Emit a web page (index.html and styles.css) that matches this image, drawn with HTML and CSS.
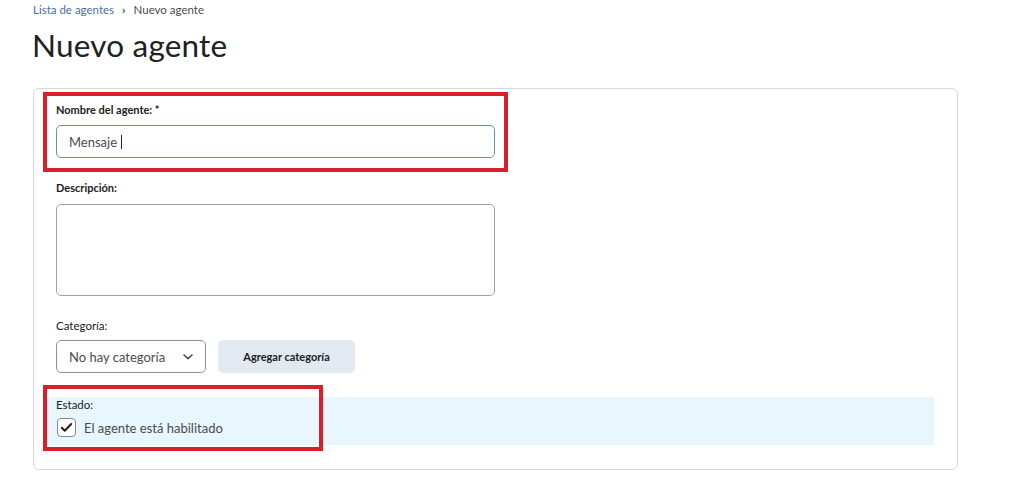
FILE: index.html
```html
<!DOCTYPE html>
<html lang="es">
<head>
<meta charset="utf-8">
<title>Nuevo agente</title>
<link rel="stylesheet" href="styles.css">
</head>
<body>
<nav class="crumbs">
  <a class="crumb-link" href="#">Lista de agentes</a>
  <span class="crumb-sep">›</span>
  <span class="crumb-current">Nuevo agente</span>
</nav>
<h1 class="title">Nuevo agente</h1>
<form class="card">
  <div class="field field-name">
    <label class="label bold">Nombre del agente: *</label>
    <div class="input"><span class="input-text">Mensaje</span><span class="caret"></span></div>
  </div>
  <div class="field field-desc">
    <label class="label bold">Descripción:</label>
    <div class="textarea"></div>
  </div>
  <div class="field field-cat">
    <label class="label">Categoría:</label>
    <div class="cat-row">
      <div class="select">
        <span>No hay categoría</span>
        <svg class="chev" width="10" height="6" viewBox="0 0 10 6"><path d="M1 1l4 3.6L9 1" fill="none" stroke="#494c4e" stroke-width="1.6" stroke-linecap="round" stroke-linejoin="round"/></svg>
      </div>
      <button type="button" class="btn">Agregar categoría</button>
    </div>
  </div>
  <div class="status">
    <div class="label status-label">Estado:</div>
    <div class="check-row">
      <span class="checkbox">
        <svg width="13" height="11" viewBox="0 0 13 11"><path d="M1.8 5.8l3 3L11.2 2" fill="none" stroke="#202122" stroke-width="2" stroke-linecap="round" stroke-linejoin="round"/></svg>
      </span>
      <span class="check-text">El agente está habilitado</span>
    </div>
  </div>
  <div class="mark mark-name"></div>
  <div class="mark mark-status"></div>
</form>
</body>
</html>
```

FILE: styles.css
```css
* { box-sizing: border-box; }
body {
  margin: 0;
  font-family: Lato, "Open Sans", "Liberation Sans", sans-serif;
  color: #202122;
  background: #fff;
  width: 1024px;
  height: 479px;
  overflow: hidden;
}
.crumbs {
  padding: 2px 0 0 33px;
  height: 17px;
  font-size: 11.5px;
  line-height: 15px;
  display: flex;
  gap: 8px;
  align-items: center;
}
.crumb-link { color: #49709a; text-decoration: none; }
.crumb-sep { color: #494c4e; font-size: 12px; font-weight: 700; }
.crumb-current { color: #494c4e; }
.title {
  margin: 9px 0 0 32px;
  font-size: 31.5px;
  font-weight: 400;
  line-height: 38px;
  color: #202122;
  letter-spacing: 0.2px;
}
.card {
  position: relative;
  margin: 24px 0 0 33px;
  width: 925px;
  height: 382px;
  border: 1px solid #d5d7d9;
  border-radius: 6px;
  padding: 13px 23px 0 22px;
}
.label {
  display: block;
  font-size: 11px;
  line-height: 16px;
  color: #202122;
}
.bold { font-weight: 700; }
.field-name .label { margin-bottom: 7px; }
.input {
  width: 439px;
  height: 33px;
  border: 1px solid #6d8ea3;
  border-radius: 5px;
  display: flex;
  align-items: center;
  padding-left: 12px;
  font-size: 13px;
  color: #494c4e;
}
.caret {
  display: inline-block;
  width: 1px;
  height: 14px;
  background: #202122;
  margin-left: 4px;
}
.field-desc { margin-top: 22px; }
.field-desc .label { margin-bottom: 8px; }
.textarea {
  width: 439px;
  height: 92px;
  border: 1px solid #9ea1a4;
  border-radius: 5px;
}
.field-cat { margin-top: 22px; }
.field-cat .label { font-size: 11.5px; margin-bottom: 6px; }
.cat-row { display: flex; gap: 12px; }
.select {
  width: 150px;
  height: 33px;
  border: 1px solid #8e9193;
  border-radius: 5px;
  display: flex;
  align-items: center;
  justify-content: space-between;
  padding: 0 12px 0 12px;
  font-size: 13px;
  color: #494c4e;
}
.chev { margin-top: 1px; }
.btn {
  width: 137px;
  height: 33px;
  border: 0;
  border-radius: 5px;
  background: #e3e9f1;
  font-family: inherit;
  font-size: 11px;
  font-weight: 700;
  color: #202122;
}
.status {
  margin: 24px 0 0 -10px;
  width: 888px;
  height: 48px;
  background: #e8f6fd;
  padding: 1px 0 0 10px;
}
.status-label { font-size: 11.5px; line-height: 14px; }
.check-row {
  display: flex;
  align-items: center;
  gap: 8px;
  margin-top: 6px;
  padding-left: 1px;
}
.checkbox {
  width: 19px;
  height: 19px;
  border: 1px solid #868a8d;
  border-radius: 4px;
  background: #fff;
  display: flex;
  align-items: center;
  justify-content: center;
}
.check-text { font-size: 13px; color: #494c4e; }
.mark {
  position: absolute;
  border: 4px solid #d8202a;
}
.mark-name { left: 9px; top: 3px; width: 465px; height: 80px; }
.mark-status { left: 9px; top: 296px; width: 280px; height: 66px; }
```
